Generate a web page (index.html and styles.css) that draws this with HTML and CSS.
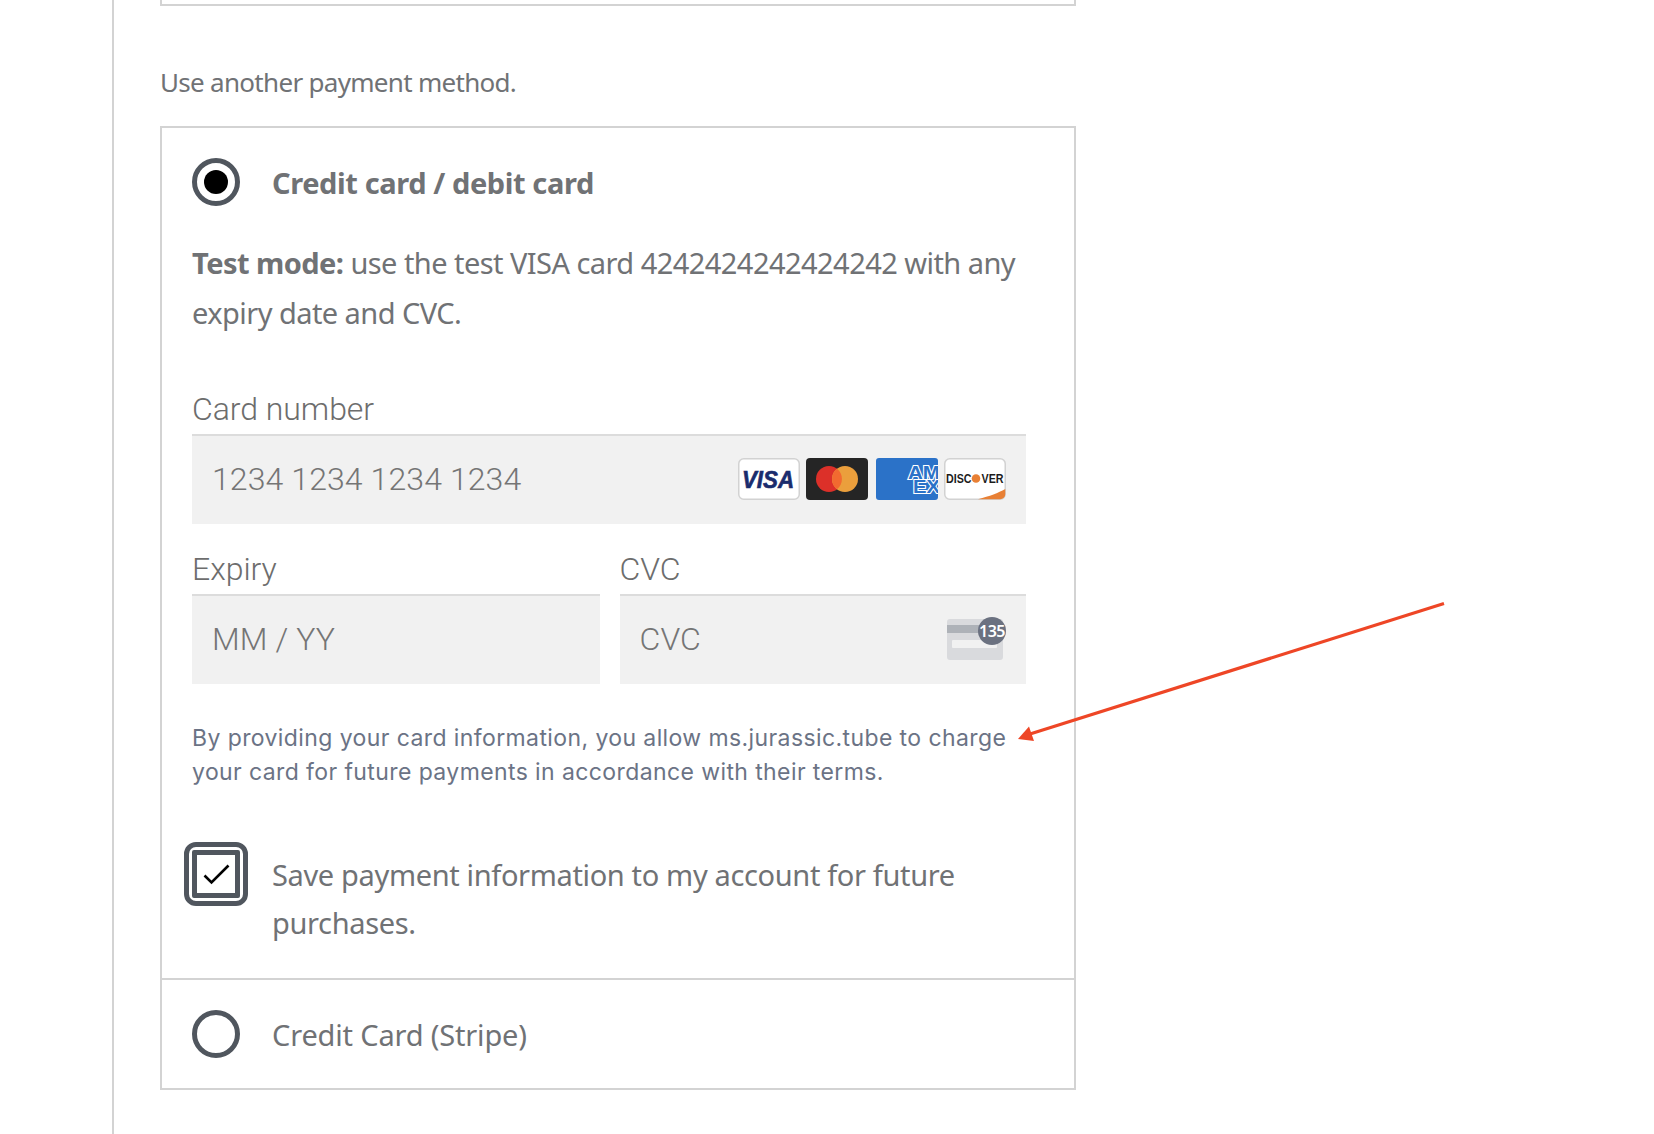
FILE: index.html
```html
<!DOCTYPE html>
<html lang="en">
<head>
<meta charset="utf-8">
<title>Payment method</title>
<link rel="stylesheet" href="styles.css">
</head>
<body>
<main class="page">
  <div class="prev-box"></div>
  <p class="intro">Use another payment method.</p>
  <section class="methods">
    <div class="method method-open">
      <label class="method-head">
        <span class="radio radio-on"></span>
        <strong class="method-title">Credit card / debit card</strong>
      </label>
      <p class="test-note"><strong>Test mode:</strong> use the test VISA card 4242424242424242 with any expiry date and CVC.</p>
      <div class="stripe-label first">Card number</div>
      <div class="stripe-field">
        <span class="placeholder">1234 1234 1234 1234</span>
        <span class="brands">
          <svg class="brand" viewBox="0 0 62 42"><rect x=".75" y=".75" width="60.5" height="40.5" rx="5" fill="#fff" stroke="#d2d2d2" stroke-width="1.5"/><text x="4" y="30" class="visa" textLength="52" lengthAdjust="spacingAndGlyphs">VISA</text></svg>
          <svg class="brand" viewBox="0 0 62 42"><rect width="62" height="42" rx="4" fill="#252525"/><circle cx="23" cy="21" r="13" fill="#dc3029"/><circle cx="39" cy="21" r="13" fill="#eb9f3c"/><path d="M31 10.8a13 13 0 0 1 0 20.4a13 13 0 0 1 0-20.4z" fill="#f26a30"/></svg>
          <svg class="brand brand-amex" viewBox="0 0 62 42"><rect width="62" height="42" rx="3" fill="#2b72c8"/><text x="32" y="21" class="amex" textLength="32" lengthAdjust="spacingAndGlyphs">AM</text><text x="37" y="35" class="amex" textLength="27" lengthAdjust="spacingAndGlyphs">EX</text></svg>
          <svg class="brand" viewBox="0 0 62 42"><rect x=".75" y=".75" width="60.5" height="40.5" rx="5" fill="#fff" stroke="#d2d2d2" stroke-width="1.5"/><path d="M34 41.250C46 38 54 35 61.250 31V36.250a5 5 0 0 1-5 5z" fill="#e88035"/><text x="2" y="24.500" class="discover" textLength="25.500" lengthAdjust="spacingAndGlyphs">DISC</text><circle cx="32" cy="20.500" r="4.300" fill="#e88035"/><text x="37.500" y="24.500" class="discover" textLength="22" lengthAdjust="spacingAndGlyphs">VER</text></svg>
        </span>
      </div>
      <div class="stripe-grid">
        <div class="stripe-col">
          <div class="stripe-label">Expiry</div>
          <div class="stripe-field"><span class="placeholder">MM / YY</span></div>
        </div>
        <div class="stripe-col">
          <div class="stripe-label">CVC</div>
          <div class="stripe-field">
            <span class="placeholder">CVC</span>
            <svg class="cvc-icon" viewBox="0 0 60 44"><rect x="1" y="2" width="56" height="41" rx="3" fill="#d9dadd"/><rect x="1" y="8" width="56" height="8" fill="#aeb2b8"/><rect x="6" y="23" width="45" height="8" rx="1" fill="#f1f1f1"/><circle cx="46" cy="14" r="14" fill="#6b7180"/><text x="46" y="19.500" text-anchor="middle" class="cvc-num">135</text></svg>
          </div>
        </div>
      </div>
      <p class="legal">By providing your card information, you allow ms.jurassic.tube to charge your card for future payments in accordance with their terms.</p>
      <label class="save-row">
        <span class="checkbox"><span class="checkbox-inner"><svg class="tick" viewBox="0 0 38 38"><path d="M7.500 20.500L14.500 27.500L31.500 10.500" fill="none" stroke="#000" stroke-width="2.600"/></svg></span></span>
        <span class="save-text">Save payment information to my account for future purchases.</span>
      </label>
    </div>
    <div class="method method-closed">
      <label class="method-head">
        <span class="radio"></span>
        <span class="method-title plain">Credit Card (Stripe)</span>
      </label>
    </div>
  </section>
</main>
<svg class="arrow" viewBox="0 0 1654 1134"><path d="M1444 603.500L1030 734" fill="none" stroke="#ee4626" stroke-width="3.200"/><path d="M1018 739L1029 726.500L1034 741z" fill="#ee4626"/></svg>
</body>
</html>
```
FILE: styles.css
```css
* { box-sizing: border-box; }
html, body { margin: 0; padding: 0; background: #fff; height: 100%; overflow: hidden; }
body { font-family: "Noto Sans", sans-serif; color: #707275; }
.page { margin-left: 112px; width: 964px; height: 1134px; border-left: 2px solid #d3d3d3; padding-left: 46px; }
.prev-box { width: 916px; height: 6px; border: 2px solid #d3d3d3; border-top: 0; }
.intro { margin: 56px 0 24px; font-size: 26px; line-height: 40px; letter-spacing: -.7px; }
.methods { width: 916px; border: 2px solid #d3d3d3; }
.method-open { padding: 30px 48px 32px 30px; border-bottom: 2px solid #d3d3d3; }
.method-closed { padding: 30px 30px 0; height: 108px; }
.method-head { display: flex; align-items: center; gap: 32px; height: 48px; }
.radio { flex: none; width: 48px; height: 48px; border-radius: 50%; border: 5px solid #50565e; background: #fff; display: flex; align-items: center; justify-content: center; }
.radio-on::after { content: ""; width: 24px; height: 24px; border-radius: 50%; background: #000; }
.method-title { font-size: 29px; font-weight: 700; letter-spacing: -.4px; }
.method-title.plain { font-weight: 400; letter-spacing: -.17px; }
.test-note { margin: 32px 0 0; font-size: 29px; line-height: 50px; letter-spacing: -.55px; }
.stripe-label { font-family: Roboto, sans-serif; font-weight: 300; font-size: 32px; line-height: 36px; letter-spacing: -.05px; color: #6d6d6d; }
.stripe-label.first { margin-top: 53px; }
.stripe-field { margin-top: 7px; height: 90px; background: #f1f1f1; border-top: 2px solid #dcdcdc; padding: 0 20px; display: flex; align-items: center; justify-content: space-between; }
.placeholder { font-family: Roboto, sans-serif; font-weight: 300; font-size: 32px; letter-spacing: .1px; color: #757575; margin-bottom: 2px; }
.brands { display: flex; gap: 6px; margin-bottom: 2px; }
.brand { display: block; width: 62px; height: 42px; }
.brand-amex { margin-left: 2px; }
.visa { font: italic 700 23px "Liberation Sans", sans-serif; fill: #1a2c6d; stroke: #1a2c6d; stroke-width: .6px; }
.amex { font: 700 18px "Liberation Sans", sans-serif; fill: #2b72c8; stroke: #fff; stroke-width: 2px; paint-order: stroke; }
.discover { font: 700 12px "Liberation Sans", sans-serif; fill: #1c1c1c; }
.cvc-num { font: 600 16px "Noto Sans", sans-serif; letter-spacing: -.5px; fill: #fff; }
.stripe-grid { margin-top: 27px; display: grid; grid-template-columns: 408px 1fr; gap: 19.500px; }
.cvc-icon { display: block; width: 60px; height: 44px; margin-bottom: 2px; }
.legal { margin: 37px 0 0; font-family: Inter, sans-serif; font-size: 23px; line-height: 34px; letter-spacing: .4px; color: #6b7385; }
.save-row { display: flex; gap: 24px; margin: 53px 0 0 -8px; }
.checkbox { flex: none; width: 64px; height: 64px; border: 5px solid #50565e; border-radius: 12px; padding: 3px; background: #fff; }
.checkbox-inner { display: block; width: 48px; height: 48px; border: 5px solid #50565e; border-radius: 2px; }
.tick { display: block; width: 38px; height: 38px; }
.save-text { padding-top: 9px; font-size: 29px; line-height: 47.500px; letter-spacing: -.35px; }
.arrow { position: absolute; left: 0; top: 0; width: 1654px; height: 1134px; pointer-events: none; }
```
